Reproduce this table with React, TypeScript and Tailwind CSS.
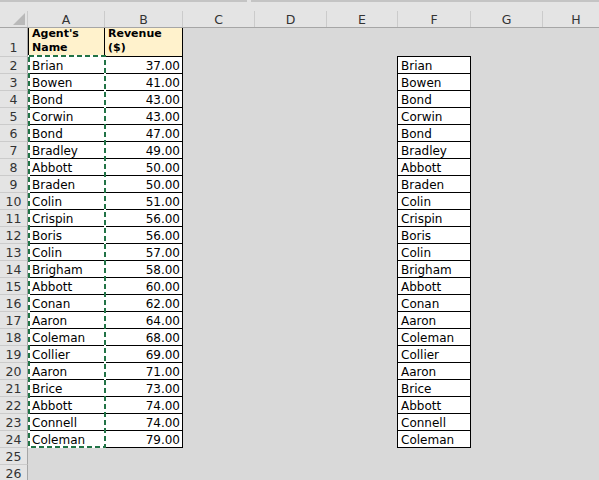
const rows: [string, number][] = [
  ["Brian", 37],
  ["Bowen", 41],
  ["Bond", 43],
  ["Corwin", 43],
  ["Bond", 47],
  ["Bradley", 49],
  ["Abbott", 50],
  ["Braden", 50],
  ["Colin", 51],
  ["Crispin", 56],
  ["Boris", 56],
  ["Colin", 57],
  ["Brigham", 58],
  ["Abbott", 60],
  ["Conan", 62],
  ["Aaron", 64],
  ["Coleman", 68],
  ["Collier", 69],
  ["Aaron", 71],
  ["Brice", 73],
  ["Abbott", 74],
  ["Connell", 74],
  ["Coleman", 79],
];

const cols = [
  { l: "A", w: "w-[77px]" },
  { l: "B", w: "w-[78px]" },
  { l: "C", w: "w-[72px]" },
  { l: "D", w: "w-[72px]" },
  { l: "E", w: "w-[71px]" },
  { l: "F", w: "w-[73px]" },
  { l: "G", w: "w-[72px]" },
];

const RowHead = ({ n, tall }: { n: number; tall?: boolean }) => (
  <div
    className={`w-[28px] shrink-0 bg-[#e4e4e4] border-r border-b border-r-[#a6a6a6] border-b-[#cbcbcb] text-center text-[12.5px] text-[#333] ${
      tall ? "flex flex-col justify-end leading-[14px] pb-[1px]" : "pt-[2px] leading-[14px]"
    }`}
  >
    {n}
  </div>
);

export default function App() {
  return (
    <div
      className="relative w-[599px] h-[480px] overflow-hidden bg-[#d9d9d9] text-black"
      style={{ fontFamily: '"DejaVu Sans", Verdana, sans-serif' }}
    >
      {/* column header strip */}
      <div className="h-[28px] bg-[#e4e4e4] border-b border-[#a6a6a6] flex flex-col">
        <div className="h-[2px] flex">
          <div className="w-[247px] bg-[#c4c4c4]" />
          <div className="w-[4px]" />
          <div className="flex-1 bg-[#c4c4c4]" />
        </div>
        <div className="flex flex-1 mt-[9px]">
          <div className="w-[28px] shrink-0 border-r border-[#cbcbcb] relative">
            <svg className="absolute right-[2px] bottom-[2px]" width="12" height="12" viewBox="0 0 12 12">
              <polygon points="12,0 12,12 0,12" fill="#b9b9b9" />
            </svg>
          </div>
          {cols.map((c) => (
            <div
              key={c.l}
              className={`${c.w} shrink-0 border-r border-[#cbcbcb] text-center text-[12.5px] leading-[15px] pt-[1px] text-[#333]`}
            >
              {c.l}
            </div>
          ))}
          <div className="flex-1 text-center text-[12.5px] leading-[15px] pt-[1px] text-[#333] pl-[10px]">H</div>
        </div>
      </div>

      {/* row 1 */}
      <div className="flex h-[29px]">
        <RowHead n={1} tall />
        <div className="w-[77px] shrink-0 bg-[#fff2cc] border-l border-r border-b border-black flex flex-col justify-end pb-[1px] pl-[3px] text-[11px] font-bold leading-[14px]">
          <div>Agent's</div>
          <div>Name</div>
        </div>
        <div className="w-[78px] shrink-0 bg-[#fff2cc] border-r border-b border-black flex flex-col justify-end pb-[1px] pl-[3px] text-[11px] font-bold leading-[14px]">
          <div>Revenue</div>
          <div>($)</div>
        </div>
        <div className="w-[72px] shrink-0" />
        <div className="w-[72px] shrink-0" />
        <div className="w-[70px] shrink-0" />
        <div className="w-[74px] shrink-0 border-b border-black" />
      </div>

      {/* data rows */}
      {rows.map(([name, rev], i) => (
        <div key={i} className="flex h-[17px] text-[12px]">
          <RowHead n={i + 2} />
          <div className="w-[77px] shrink-0 bg-white border-l border-r border-b border-black pl-[3px] pt-[2px] leading-[14px]">
            {name}
          </div>
          <div className="w-[78px] shrink-0 bg-white border-r border-b border-black pr-[2px] pt-[2px] leading-[14px] text-right">
            {rev.toFixed(2)}
          </div>
          <div className="w-[72px] shrink-0" />
          <div className="w-[72px] shrink-0" />
          <div className="w-[70px] shrink-0" />
          <div className="w-[74px] shrink-0 bg-white border-l border-r border-b border-black pl-[3px] pt-[2px] leading-[14px]">
            {name}
          </div>
        </div>
      ))}

      <div className="flex h-[17px]">
        <RowHead n={25} />
      </div>
      <div className="flex h-[17px]">
        <RowHead n={26} />
      </div>

      {/* copy selection marquee */}
      <svg
        className="absolute left-[28px] top-[55px]"
        width="79"
        height="394"
        viewBox="0 0 79 394"
        shapeRendering="crispEdges"
      >
        <rect x="1" y="1" width="76" height="391" fill="none" stroke="#ffffff" strokeWidth="2" />
        <rect x="1" y="1" width="76" height="391" fill="none" stroke="#217346" strokeWidth="2" strokeDasharray="5 3" />
      </svg>
    </div>
  );
}
